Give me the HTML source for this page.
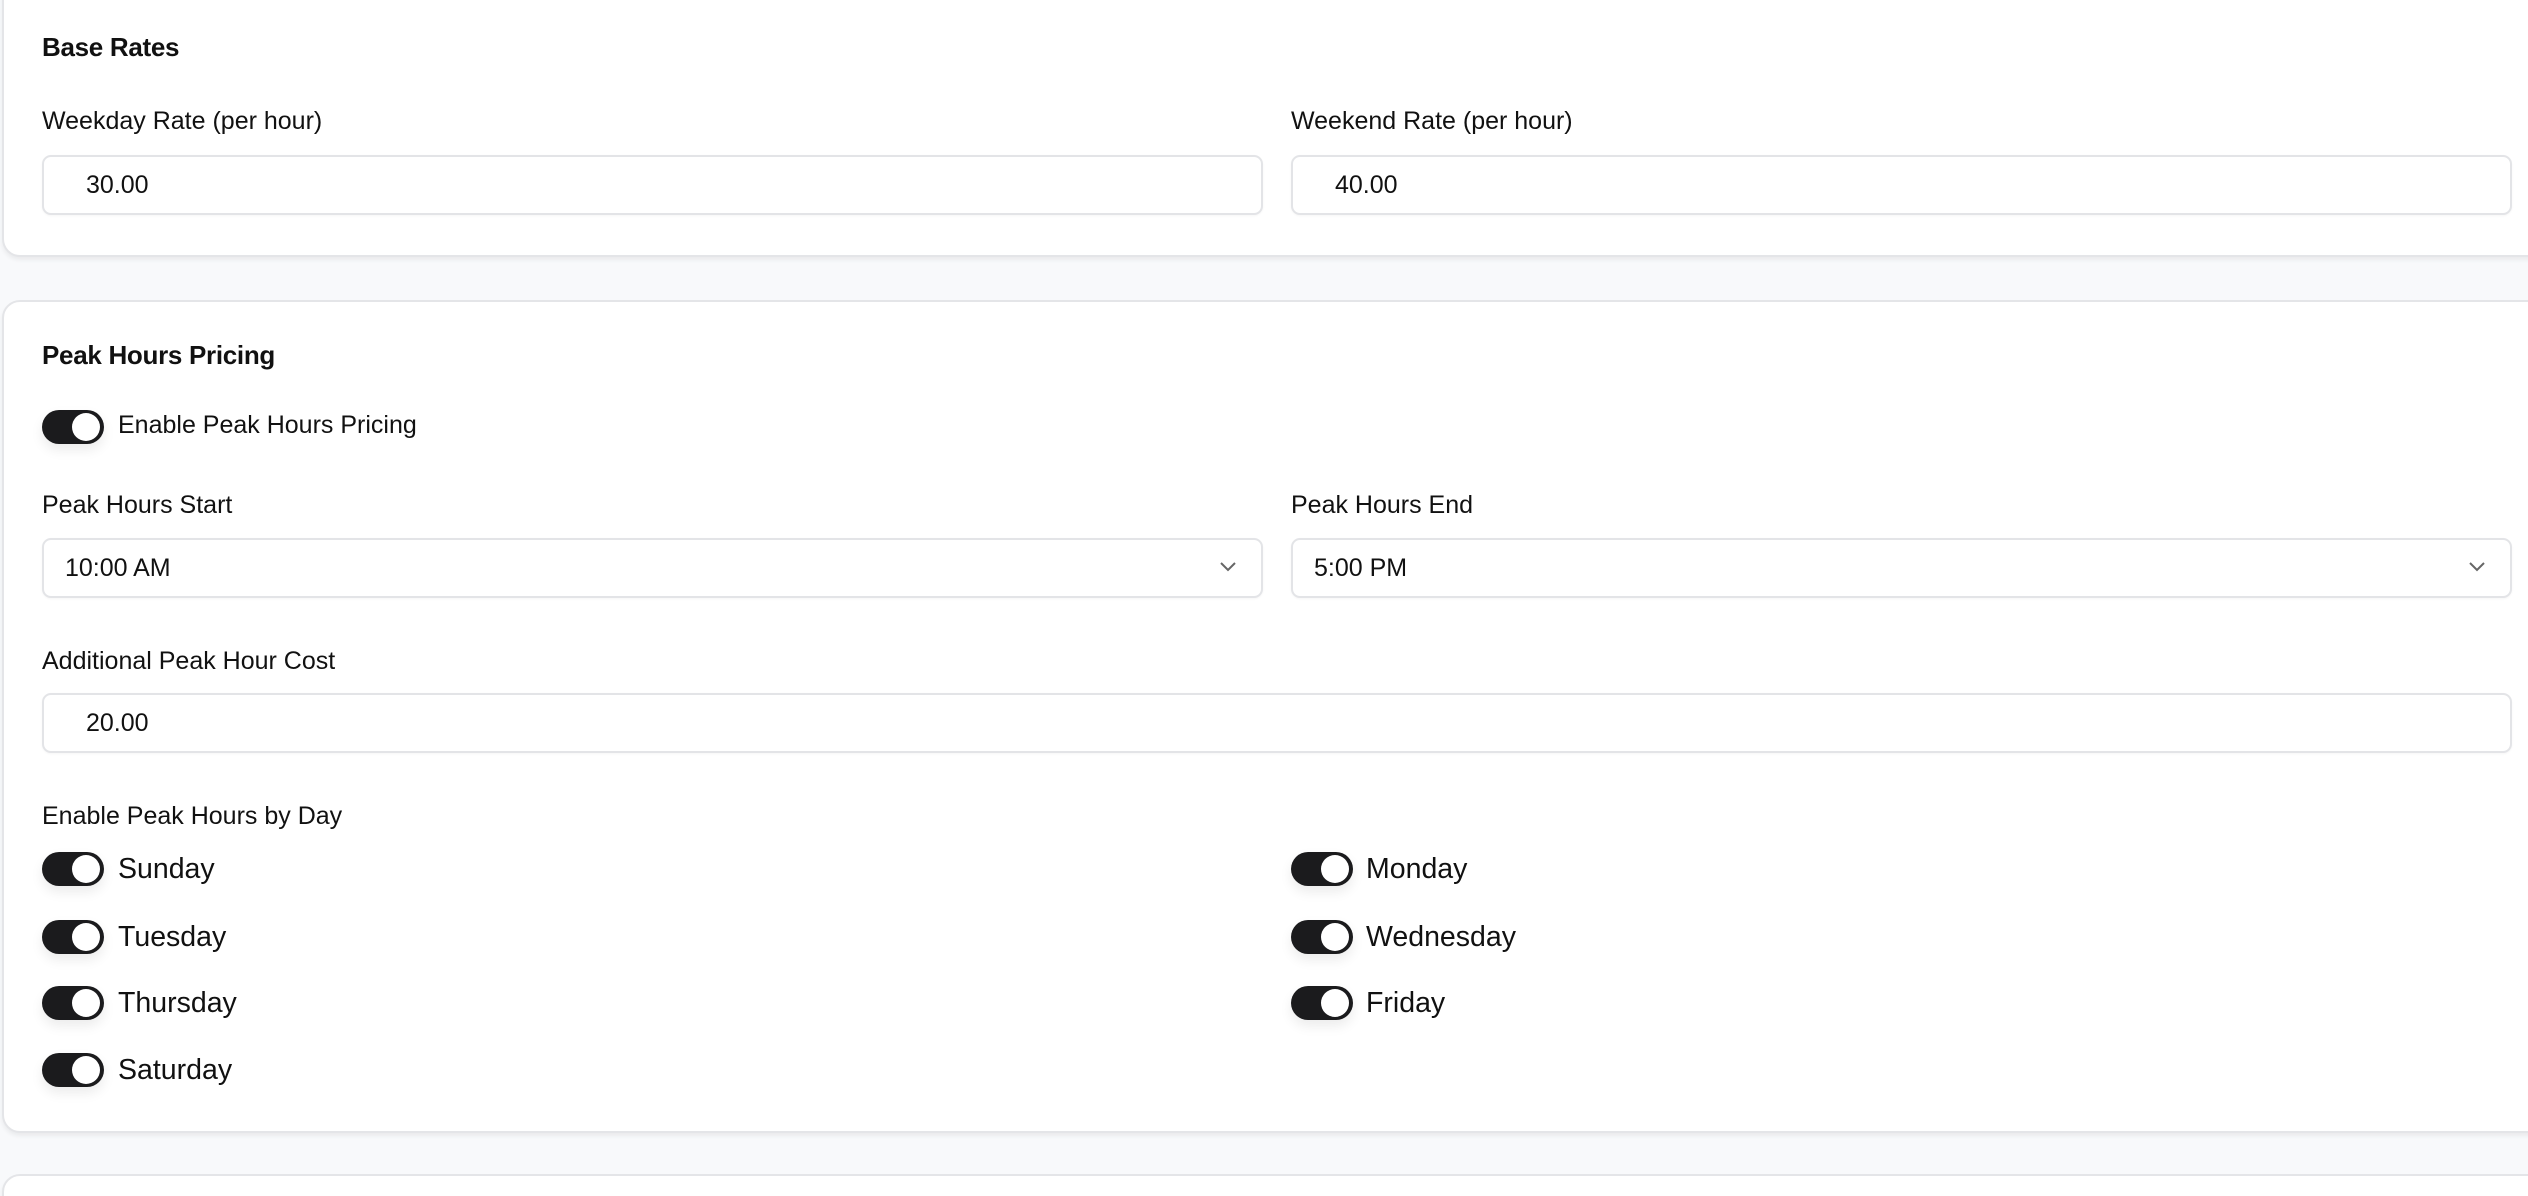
<!DOCTYPE html>
<html><head><meta charset="utf-8"><style>
*{box-sizing:border-box;margin:0;padding:0}
html,body{width:2528px;height:1196px;overflow:hidden}
body{background:#f8f9fb;font-family:"Liberation Sans",sans-serif;color:#111;position:relative}
.card{position:absolute;left:2px;width:2560px;background:#fff;border:2px solid #e4e5e8;border-radius:18px;box-shadow:0 3px 4px rgba(0,0,0,0.06)}
.abs{position:absolute}
.title{font-size:26px;font-weight:bold;letter-spacing:-0.3px}
.lbl{font-size:25px;letter-spacing:0px}
.inp{position:absolute;height:60px;border:2px solid #e3e4e7;border-radius:9px;background:#fff;font-size:25px;line-height:56px;box-shadow:0 1px 2px rgba(0,0,0,0.04)}
.tg{position:absolute;width:62px;height:34px;border-radius:17px;background:#1b1b1d;box-shadow:0 6px 12px rgba(0,0,0,0.08)}
.tg::after{content:"";position:absolute;right:4px;top:3px;width:28px;height:28px;border-radius:50%;background:#fff}
.day{position:absolute;font-size:28.5px;letter-spacing:0px}
.chev{position:absolute;right:24px;top:20px}
</style></head><body>
<div class="card" style="top:-20px;height:277px"></div>
<div class="abs title" style="left:42px;top:32px">Base Rates</div>
<div class="abs lbl" style="left:42px;top:107px">Weekday Rate (per hour)</div>
<div class="abs lbl" style="left:1291px;top:107px">Weekend Rate (per hour)</div>
<div class="inp" style="left:42px;top:155px;width:1221px;padding-left:42px">30.00</div>
<div class="inp" style="left:1291px;top:155px;width:1221px;padding-left:42px">40.00</div>

<div class="card" style="top:300px;height:833px"></div>
<div class="abs title" style="left:42px;top:340px">Peak Hours Pricing</div>
<div class="tg" style="left:42px;top:410px"></div>
<div class="abs lbl" style="left:118px;top:411px">Enable Peak Hours Pricing</div>
<div class="abs lbl" style="left:42px;top:491px">Peak Hours Start</div>
<div class="abs lbl" style="left:1291px;top:491px">Peak Hours End</div>
<div class="inp" style="left:42px;top:538px;width:1221px;padding-left:21px">10:00 AM<svg class="chev" width="18" height="12" viewBox="0 0 18 12"><path d="M2 3l7 7 7-7" fill="none" stroke="#666" stroke-width="2"/></svg></div>
<div class="inp" style="left:1291px;top:538px;width:1221px;padding-left:21px">5:00 PM<svg class="chev" width="18" height="12" viewBox="0 0 18 12"><path d="M2 3l7 7 7-7" fill="none" stroke="#666" stroke-width="2"/></svg></div>
<div class="abs lbl" style="left:42px;top:647px">Additional Peak Hour Cost</div>
<div class="inp" style="left:42px;top:693px;width:2470px;padding-left:42px">20.00</div>
<div class="abs lbl" style="left:42px;top:802px">Enable Peak Hours by Day</div>

<div class="tg" style="left:42px;top:852px"></div><div class="day" style="left:118px;top:853px">Sunday</div>
<div class="tg" style="left:1291px;top:852px"></div><div class="day" style="left:1366px;top:853px">Monday</div>
<div class="tg" style="left:42px;top:920px"></div><div class="day" style="left:118px;top:921px">Tuesday</div>
<div class="tg" style="left:1291px;top:920px"></div><div class="day" style="left:1366px;top:921px">Wednesday</div>
<div class="tg" style="left:42px;top:986px"></div><div class="day" style="left:118px;top:987px">Thursday</div>
<div class="tg" style="left:1291px;top:986px"></div><div class="day" style="left:1366px;top:987px">Friday</div>
<div class="tg" style="left:42px;top:1053px"></div><div class="day" style="left:118px;top:1054px">Saturday</div>

<div class="card" style="top:1174px;height:40px"></div>
</body></html>
